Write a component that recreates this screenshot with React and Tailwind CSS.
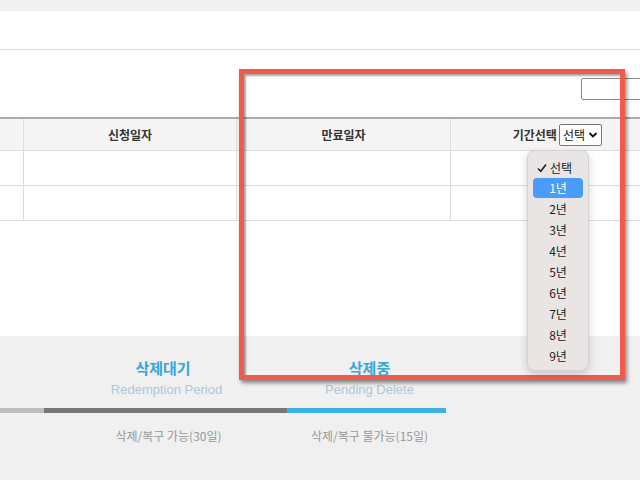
import React from 'react';

const years = ['2년', '3년', '4년', '5년', '6년', '7년', '8년', '9년'];

const font = { fontFamily: '"Noto Sans CJK KR", "Noto Sans", sans-serif' };
const latin = { fontFamily: '"Liberation Sans", Arial, sans-serif' };

export default function App() {
  return (
    <div className="relative w-[640px] h-[480px] overflow-hidden bg-white text-[#333]" style={font}>
      <div className="h-[11px] bg-[#f1f1f1]" />
      <div className="h-[39px] border-b border-[#dddddd]" />

      {/* search row */}
      <div className="h-[67px] flex justify-end items-center pt-[10px]">
        <div className="w-[70px] h-[22px] border border-[#888] rounded-[2px] -mr-[11px]" />
      </div>

      {/* table */}
      <div className="border-t-2 border-[#aaaaaa]">
        <div className="grid grid-cols-[24px_213px_214px_1fr] h-[32px] bg-[#f5f5f5] border-b border-[#dddddd] text-[12px] font-bold">
          <div className="border-r border-[#dddddd]" />
          <div className="border-r border-[#dddddd] flex items-center justify-center">신청일자</div>
          <div className="border-r border-[#dddddd] flex items-center justify-center">만료일자</div>
          <div className="flex items-center justify-end pr-[38px] gap-[2px]">
            <span>기간선택</span>
            <span className="h-[22px] px-[3px] border border-[#777] rounded-[2px] bg-white flex items-center gap-[3px] font-normal text-[12px] text-[#111]">
              선택
              <svg width="10" height="8" viewBox="0 0 10 8">
                <path d="M1.5 2 L5 5.5 L8.5 2" fill="none" stroke="#111" strokeWidth="1.8" />
              </svg>
            </span>
          </div>
        </div>
        {[0, 1].map((r) => (
          <div key={r} className="grid grid-cols-[24px_213px_214px_1fr] h-[35px] border-b border-[#dddddd]">
            <div className="border-r border-[#dddddd]" />
            <div className="border-r border-[#dddddd]" />
            <div className="border-r border-[#dddddd]" />
            <div />
          </div>
        ))}
      </div>

      {/* deletion steps */}
      <div className="absolute left-0 right-0 top-[336px] bottom-0 bg-[#f0f0f0]">
        <div className="grid grid-cols-[44px_243px_159px_1fr] mt-[22px]">
          <div />
          <div className="flex flex-col items-center">
            <span className="text-[15px] font-bold text-[#36a6dc] leading-[20px] -ml-[5px]">삭제대기</span>
            <span className="text-[13px] text-[#a8c8d8] leading-[20px] mt-[2px] ml-[2px]" style={latin}>Redemption Period</span>
          </div>
          <div className="flex flex-col items-center pl-[6px]">
            <span className="text-[15px] font-bold text-[#36a6dc] leading-[20px]">삭제중</span>
            <span className="text-[13px] text-[#a8c8d8] leading-[20px] mt-[2px]" style={latin}>Pending Delete</span>
          </div>
          <div />
        </div>
        <div className="grid grid-cols-[44px_243px_159px_1fr] mt-[8px] h-[5px]">
          <div className="bg-[#bdbdbd]" />
          <div className="bg-[#777777]" />
          <div className="bg-[#3db1e1]" />
          <div />
        </div>
        <div className="grid grid-cols-[44px_243px_159px_1fr] mt-[14px] text-[12px] text-[#999]">
          <div />
          <div className="text-center pl-[6px]">삭제/복구 가능(30일)</div>
          <div className="text-center pl-[6px]">삭제/복구 불가능(15일)</div>
          <div />
        </div>
      </div>

      {/* red highlight box */}
      <div className="absolute left-[239px] top-[69px] w-[386px] h-[311px] border-[5px] border-[#f25a4b] shadow-[2px_3px_4px_rgba(0,0,0,0.45),inset_2px_2px_2px_rgba(0,0,0,0.35)]" />

      {/* select dropdown */}
      <div className="absolute left-[527px] top-[150px] w-[62px] h-[221px] rounded-[8px] bg-[#e9e5e5] border border-[#d6d2d2] shadow-[0_3px_8px_rgba(0,0,0,0.18)] pt-[6px] text-[12px] text-[#222]">
        <div className="h-[21px] flex items-center pl-[9px] gap-[3px]">
          <svg width="10" height="10" viewBox="0 0 10 10">
            <path d="M1 5.5 L3.8 8.3 L9 1.5" fill="none" stroke="#222" strokeWidth="1.6" />
          </svg>
          <span>선택</span>
        </div>
        <div className="mx-[5px] h-[20px] rounded-[4px] bg-[#4a9cf8] text-white flex items-center justify-center">1년</div>
        {years.map((y) => (
          <div key={y} className="h-[21px] flex items-center justify-center">{y}</div>
        ))}
      </div>
    </div>
  );
}
